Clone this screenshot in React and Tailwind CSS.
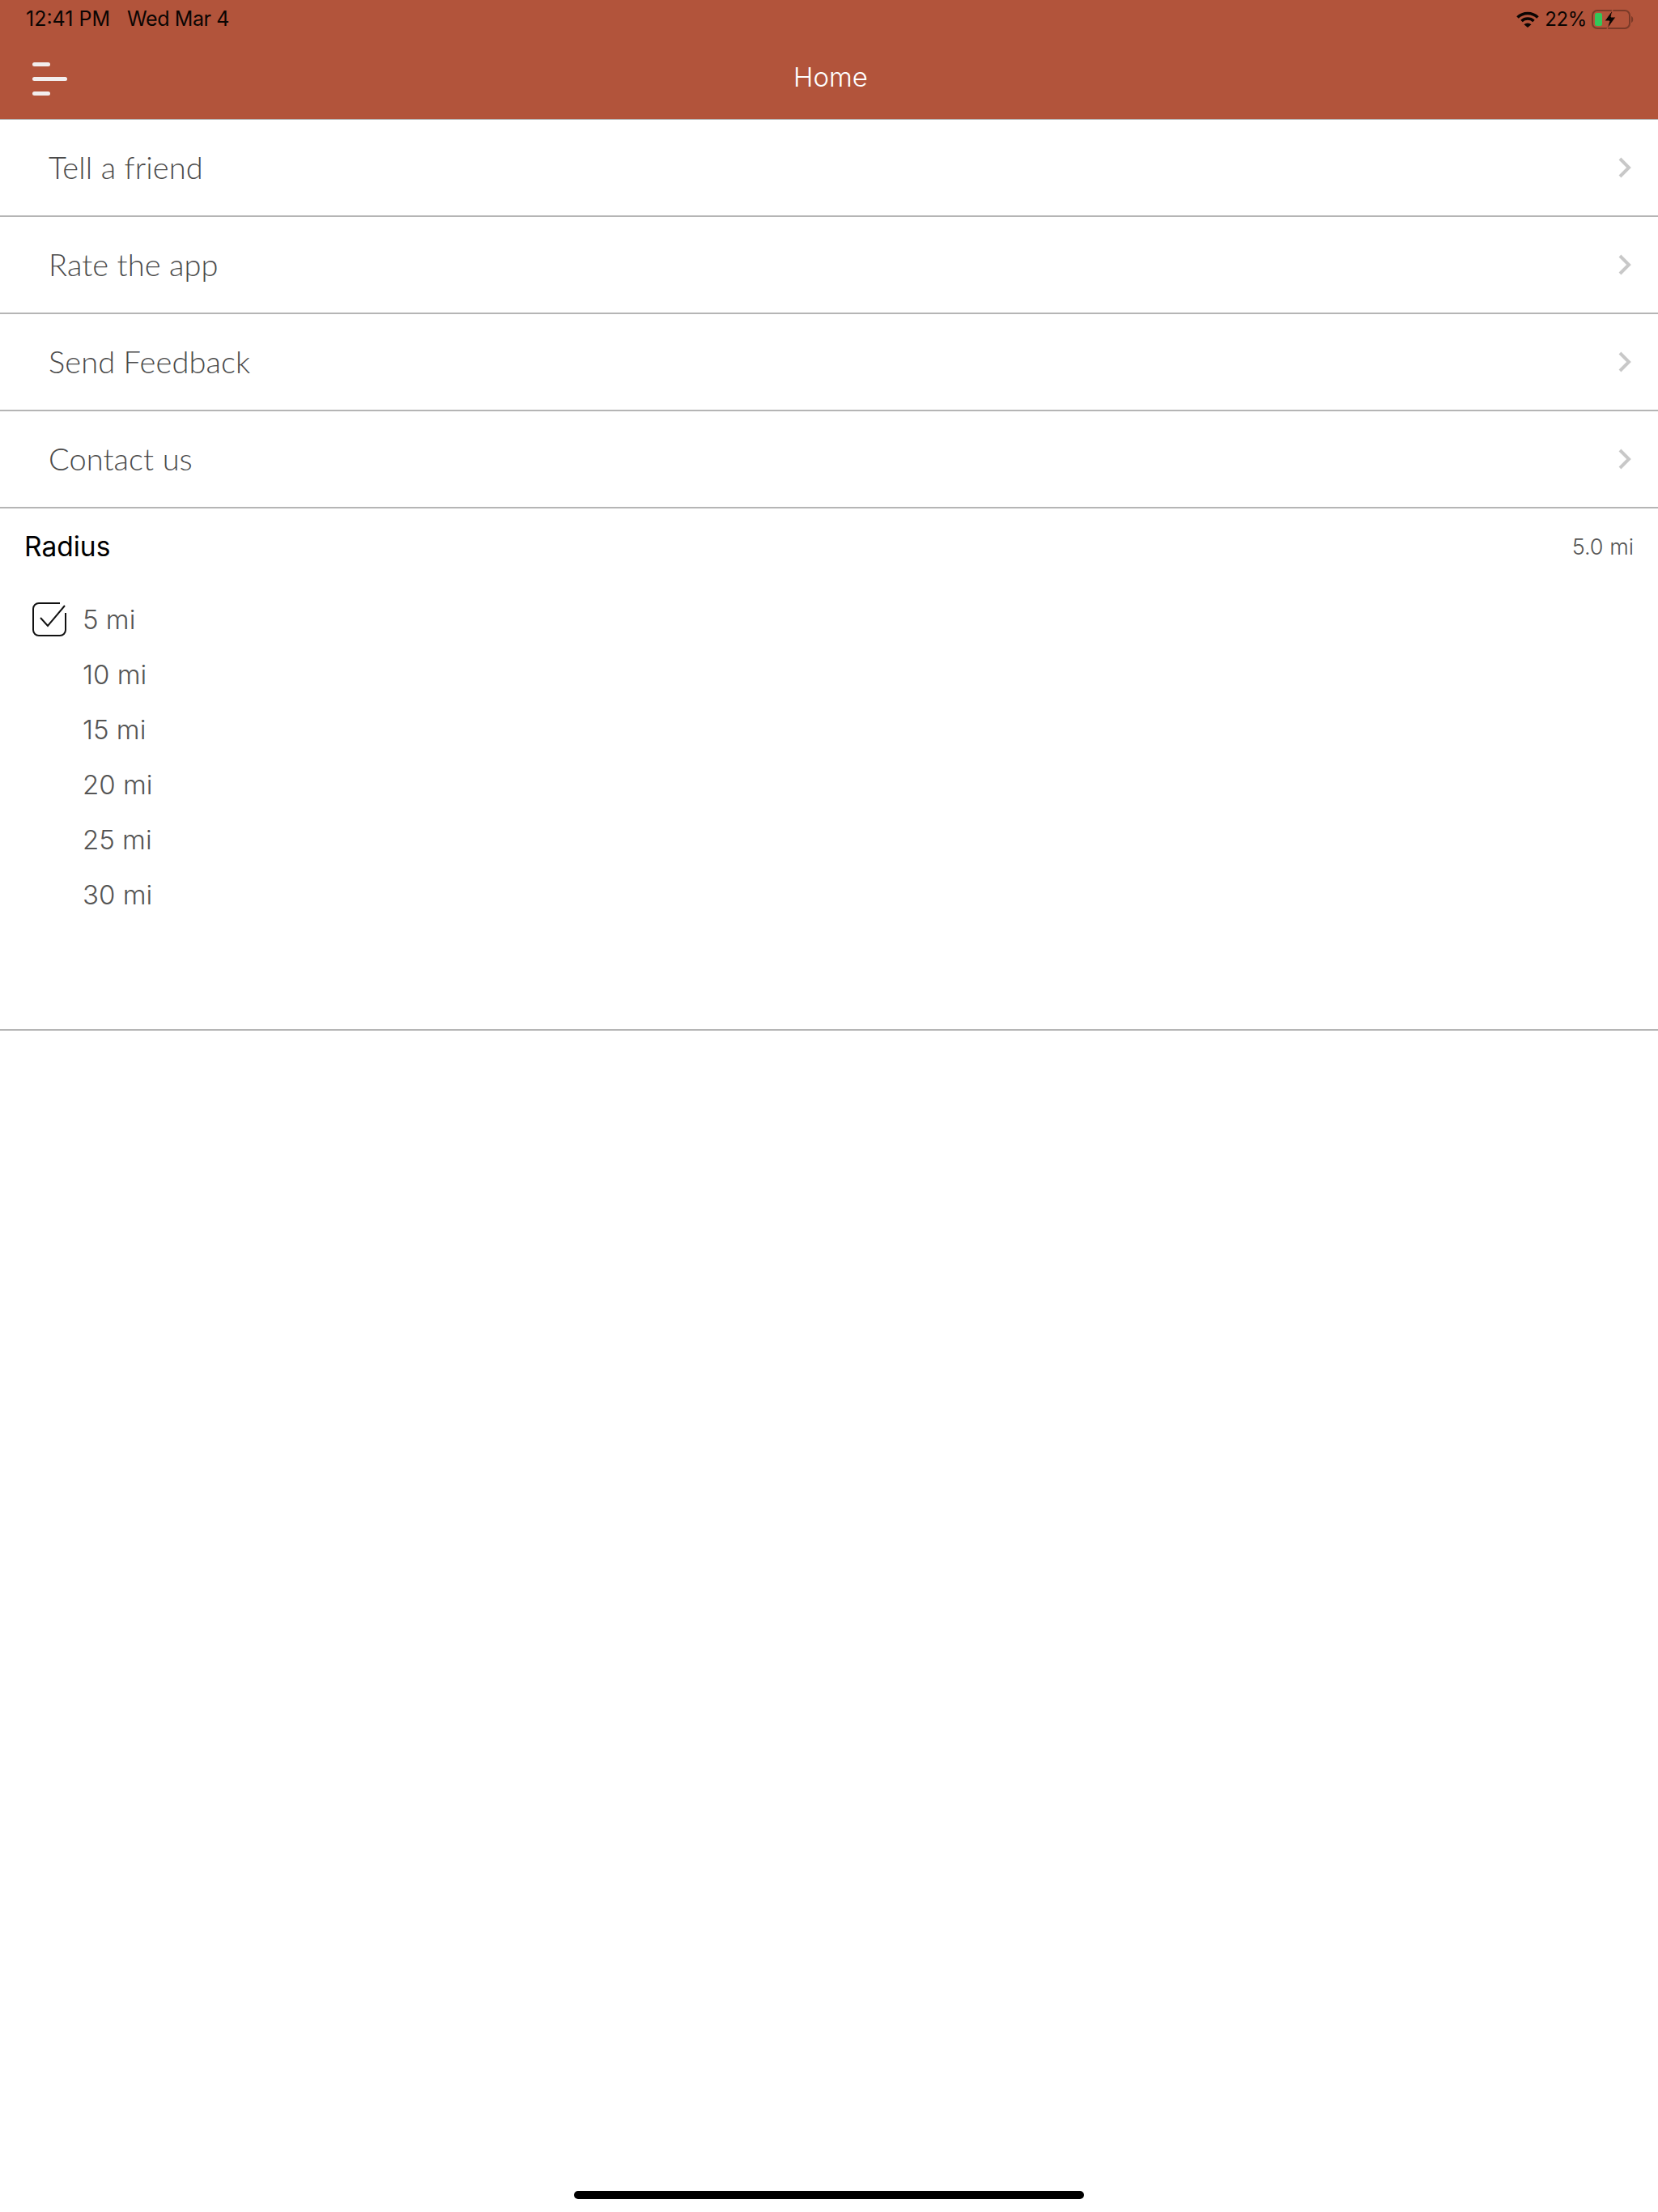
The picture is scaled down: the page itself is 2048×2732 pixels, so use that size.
import React from "react";
const rows = ["Tell a friend", "Rate the app", "Send Feedback", "Contact us"];
const opts = ["5 mi", "10 mi", "15 mi", "20 mi", "25 mi", "30 mi"];
export default function App() {
  return (
    <div className="relative w-[2048px] h-[2732px] bg-white overflow-hidden font-['Inter',sans-serif]">
      <header className="h-[148px] bg-[#b2543b] flex flex-col border-b border-[#b5b5b5]">
        <div className="h-[48px] flex items-center justify-between pl-[32px] pr-[30px] text-[25px] text-[#0a0503]">
          <div className="flex gap-[21px]"><span>12:41 PM</span><span className="tracking-[-0.4px]">Wed Mar 4</span></div>
          <div className="flex items-center gap-[7px]">
            <svg width="28" height="20" viewBox="0 0 28 20"><path d="M1.500 7.500a18 18 0 0 1 25 0M6.500 12a11 11 0 0 1 15 0" fill="none" stroke="#0a0503" strokeWidth="3.6"/><path d="M9.500 16.200l4.500 3.800 4.500-3.800a6.500 6.500 0 0 0-9 0z" fill="#0a0503"/></svg>
            <span className="text-[24px] tracking-[-0.4px]">22%</span>
            <svg width="52" height="24" viewBox="0 0 52 24" className="ml-[-1px]"><rect x="1" y="1" width="46" height="22" rx="6" fill="none" stroke="#7a3a28" strokeWidth="2"/><rect x="4" y="4" width="9" height="16" rx="2.500" fill="#34c759"/><path d="M26 0L16 14h6l-3 10 11-15h-6z" fill="#0a0503" stroke="#b2543b" strokeWidth="1"/><path d="M49 8c3 1 3 7 0 8z" fill="#7a3a28"/></svg>
          </div>
        </div>
        <div className="relative flex-1 flex items-center justify-center pb-[4px] pl-[4px]">
          <div className="absolute left-[40px] top-[29px] flex flex-col gap-[13px] items-start">
            <div className="w-[22px] h-[5px] rounded-full bg-[#f2eeee]" />
            <div className="w-[43px] h-[5px] rounded-full bg-[#f2eeee]" />
            <div className="w-[22px] h-[5px] rounded-full bg-[#f2eeee]" />
          </div>
          <span className="text-white text-[33px] font-light">Home</span>
        </div>
      </header>
      {rows.map((r) => (
        <div key={r} className="h-[120px] border-b-2 border-[#b5b5b5] flex items-center justify-between pl-[60px] pr-[33px]">
          <span className="text-[38px] font-light text-[#4a4a4a] tracking-[0.1px] pb-[2px] font-['Lato',sans-serif]">{r}</span>
          <svg width="16" height="26" viewBox="0 0 16 26"><path d="M2 2l11 11L2 24" fill="none" stroke="#c8c8c8" strokeWidth="4"/></svg>
        </div>
      ))}
      <section className="h-[645px] border-b-2 border-[#b5b5b5] pt-[22px]">
        <div className="flex items-center justify-between pl-[30px] pr-[30px]">
          <span className="text-[33.500px] text-black">Radius</span>
          <span className="text-[27px] font-light text-[#555555] pt-[2px]">5.0 mi</span>
        </div>
        <div className="mt-[31px] pl-[40px] flex flex-col">
          {opts.map((o, i) => (
            <div key={o} className="h-[68px] flex items-center gap-[20px]">
              <div className="w-[42px] h-[42px] flex items-center justify-center">
                {i === 0 && (
                  <svg width="42" height="42" viewBox="0 0 42 42"><path d="M34 1H8a7 7 0 0 0-7 7v26a7 7 0 0 0 7 7h26a7 7 0 0 0 7-7V13" fill="none" stroke="#111" strokeWidth="2"/><path d="M10 19l9 10L40 4" fill="none" stroke="#111" strokeWidth="2"/></svg>
                )}
              </div>
              <span className="text-[33px] font-light text-[#555555]">{o}</span>
            </div>
          ))}
        </div>
      </section>
      <div className="absolute bottom-[16px] left-[709px] w-[630px] h-[10px] rounded-full bg-black" />
    </div>
  );
}
